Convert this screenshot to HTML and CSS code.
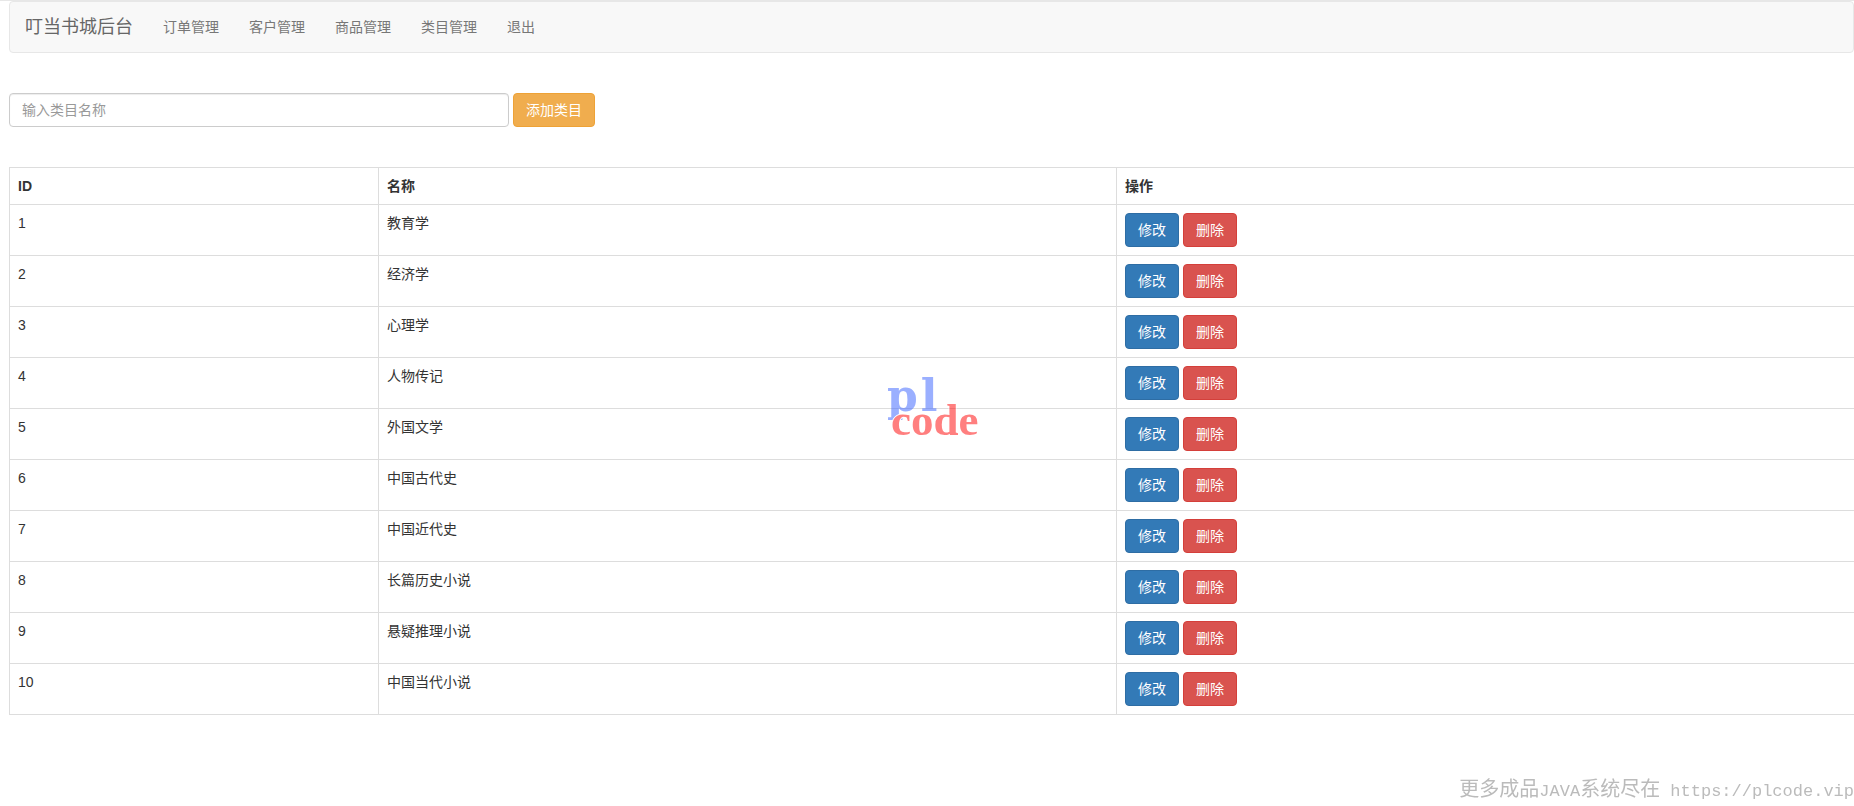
FILE: index.html
```html
<!DOCTYPE html>
<html lang="zh-CN">
<head>
    <meta charset="UTF-8">
    <meta name="viewport" content="width=device-width, initial-scale=1.0">
    <title>类目管理</title>
    <link rel="stylesheet" href="styles.css">
</head>
<body>
    <div class="container-fluid">
        <nav class="navbar">
            <a class="navbar-brand" href="#">叮当书城后台</a>
            <ul class="navbar-nav">
                <li><a href="#">订单管理</a></li>
                <li><a href="#">客户管理</a></li>
                <li><a href="#">商品管理</a></li>
                <li><a href="#">类目管理</a></li>
                <li><a href="#">退出</a></li>
            </ul>
        </nav>

        <form class="form-inline" action="#" method="post">
            <input type="text" class="form-control" name="name" placeholder="输入类目名称" aria-label="输入类目名称" required>
            <button type="submit" class="btn btn-warning">添加类目</button>
        </form>

        <table class="table">
            <thead>
                <tr>
                    <th class="col-id">ID</th>
                    <th class="col-name">名称</th>
                    <th class="col-action">操作</th>
                </tr>
            </thead>
            <tbody>
                <tr>
                    <td>1</td>
                    <td>教育学</td>
                    <td><div class="actions"><button type="button" class="btn btn-primary">修改</button><button type="button" class="btn btn-danger">删除</button></div></td>
                </tr>
                <tr>
                    <td>2</td>
                    <td>经济学</td>
                    <td><div class="actions"><button type="button" class="btn btn-primary">修改</button><button type="button" class="btn btn-danger">删除</button></div></td>
                </tr>
                <tr>
                    <td>3</td>
                    <td>心理学</td>
                    <td><div class="actions"><button type="button" class="btn btn-primary">修改</button><button type="button" class="btn btn-danger">删除</button></div></td>
                </tr>
                <tr>
                    <td>4</td>
                    <td>人物传记</td>
                    <td><div class="actions"><button type="button" class="btn btn-primary">修改</button><button type="button" class="btn btn-danger">删除</button></div></td>
                </tr>
                <tr>
                    <td>5</td>
                    <td>外国文学</td>
                    <td><div class="actions"><button type="button" class="btn btn-primary">修改</button><button type="button" class="btn btn-danger">删除</button></div></td>
                </tr>
                <tr>
                    <td>6</td>
                    <td>中国古代史</td>
                    <td><div class="actions"><button type="button" class="btn btn-primary">修改</button><button type="button" class="btn btn-danger">删除</button></div></td>
                </tr>
                <tr>
                    <td>7</td>
                    <td>中国近代史</td>
                    <td><div class="actions"><button type="button" class="btn btn-primary">修改</button><button type="button" class="btn btn-danger">删除</button></div></td>
                </tr>
                <tr>
                    <td>8</td>
                    <td>长篇历史小说</td>
                    <td><div class="actions"><button type="button" class="btn btn-primary">修改</button><button type="button" class="btn btn-danger">删除</button></div></td>
                </tr>
                <tr>
                    <td>9</td>
                    <td>悬疑推理小说</td>
                    <td><div class="actions"><button type="button" class="btn btn-primary">修改</button><button type="button" class="btn btn-danger">删除</button></div></td>
                </tr>
                <tr>
                    <td>10</td>
                    <td>中国当代小说</td>
                    <td><div class="actions"><button type="button" class="btn btn-primary">修改</button><button type="button" class="btn btn-danger">删除</button></div></td>
                </tr>
            </tbody>
        </table>
    </div>

    <div class="logo">
        <div class="logo-top"><span>p</span><span>l</span></div>
        <div class="logo-bottom">code</div>
    </div>
    <div class="site-note">更多成品<span class="mono">JAVA</span>系统尽在<span class="mono"> https://plcode.vip</span></div>
</body>
</html>
```

FILE: styles.css
```css
* {
    box-sizing: border-box;
}
body {
    margin: 0;
    border-top: 1px solid #e7e7e7;
    font-family: "Liberation Sans", "Noto Sans CJK SC", sans-serif;
    font-size: 14px;
    line-height: 20px;
    color: #333;
    background-color: #fff;
    overflow-x: hidden;
}
.container-fluid {
    padding-left: 9px;
}

/* navbar */
.navbar {
    display: flex;
    min-height: 52px;
    margin-bottom: 40px;
    background-color: #f8f8f8;
    border: 1px solid #e7e7e7;
    border-radius: 4px;
}
.navbar a {
    display: block;
    padding: 15px;
    color: #777;
    text-decoration: none;
}
.navbar a:hover {
    color: #333;
}
.navbar .navbar-brand {
    font-size: 18px;
    color: #666;
}
.navbar-nav {
    display: flex;
    margin: 0;
    padding: 0;
    list-style: none;
}

/* form */
.form-inline {
    display: flex;
    gap: 4px;
    margin-bottom: 40px;
}
.form-control {
    width: 500px;
    height: 34px;
    padding: 6px 12px;
    font-family: inherit;
    font-size: 14px;
    color: #555;
    background-color: #fff;
    border: 1px solid #ccc;
    border-radius: 4px;
    box-shadow: inset 0 1px 1px rgba(0, 0, 0, 0.075);
}
.form-control::placeholder {
    color: #999;
}

/* buttons */
.btn {
    height: 34px;
    padding: 6px 12px;
    font-family: inherit;
    font-size: 14px;
    line-height: 20px;
    color: #fff;
    border: 1px solid transparent;
    border-radius: 4px;
    cursor: pointer;
}
.btn-primary {
    background-color: #337ab7;
    border-color: #2e6da4;
}
.btn-danger {
    background-color: #d9534f;
    border-color: #d43f3a;
}
.btn-warning {
    background-color: #f0ad4e;
    border-color: #eea236;
}

/* table */
.table {
    width: calc(100% + 1px);
    table-layout: fixed;
    border-collapse: collapse;
}
.table th,
.table td {
    padding: 8px;
    border: 1px solid #ddd;
    text-align: left;
    vertical-align: top;
}
.col-id {
    width: 20%;
}
.col-name,
.col-action {
    width: 40%;
}
.actions {
    display: flex;
    gap: 4px;
}

/* logo over the middle of the page */
.logo {
    position: fixed;
    top: 50%;
    left: 50%;
    margin: -32px 0 0 -40px;
    font-family: "Liberation Serif", serif;
    font-weight: bold;
    opacity: 0.5;
    pointer-events: none;
}
.logo-top {
    display: flex;
    gap: 3px;
    font-family: "DejaVu Serif", serif;
    font-size: 44px;
    line-height: 50px;
    color: #3761ff;
}
.logo-bottom {
    margin: -24px 0 0 4px;
    font-size: 45px;
    line-height: 46px;
    color: #f00;
    text-shadow: 1px 0 #fff, -1px 0 #fff, 0 1px #fff, 0 -1px #fff;
}

.site-note {
    position: fixed;
    right: 0;
    bottom: 2px;
    font-size: 20px;
    line-height: 24px;
    color: #bbb;
    white-space: pre;
}
.mono {
    font-family: "Liberation Mono", monospace;
    font-size: 17px;
}
```
